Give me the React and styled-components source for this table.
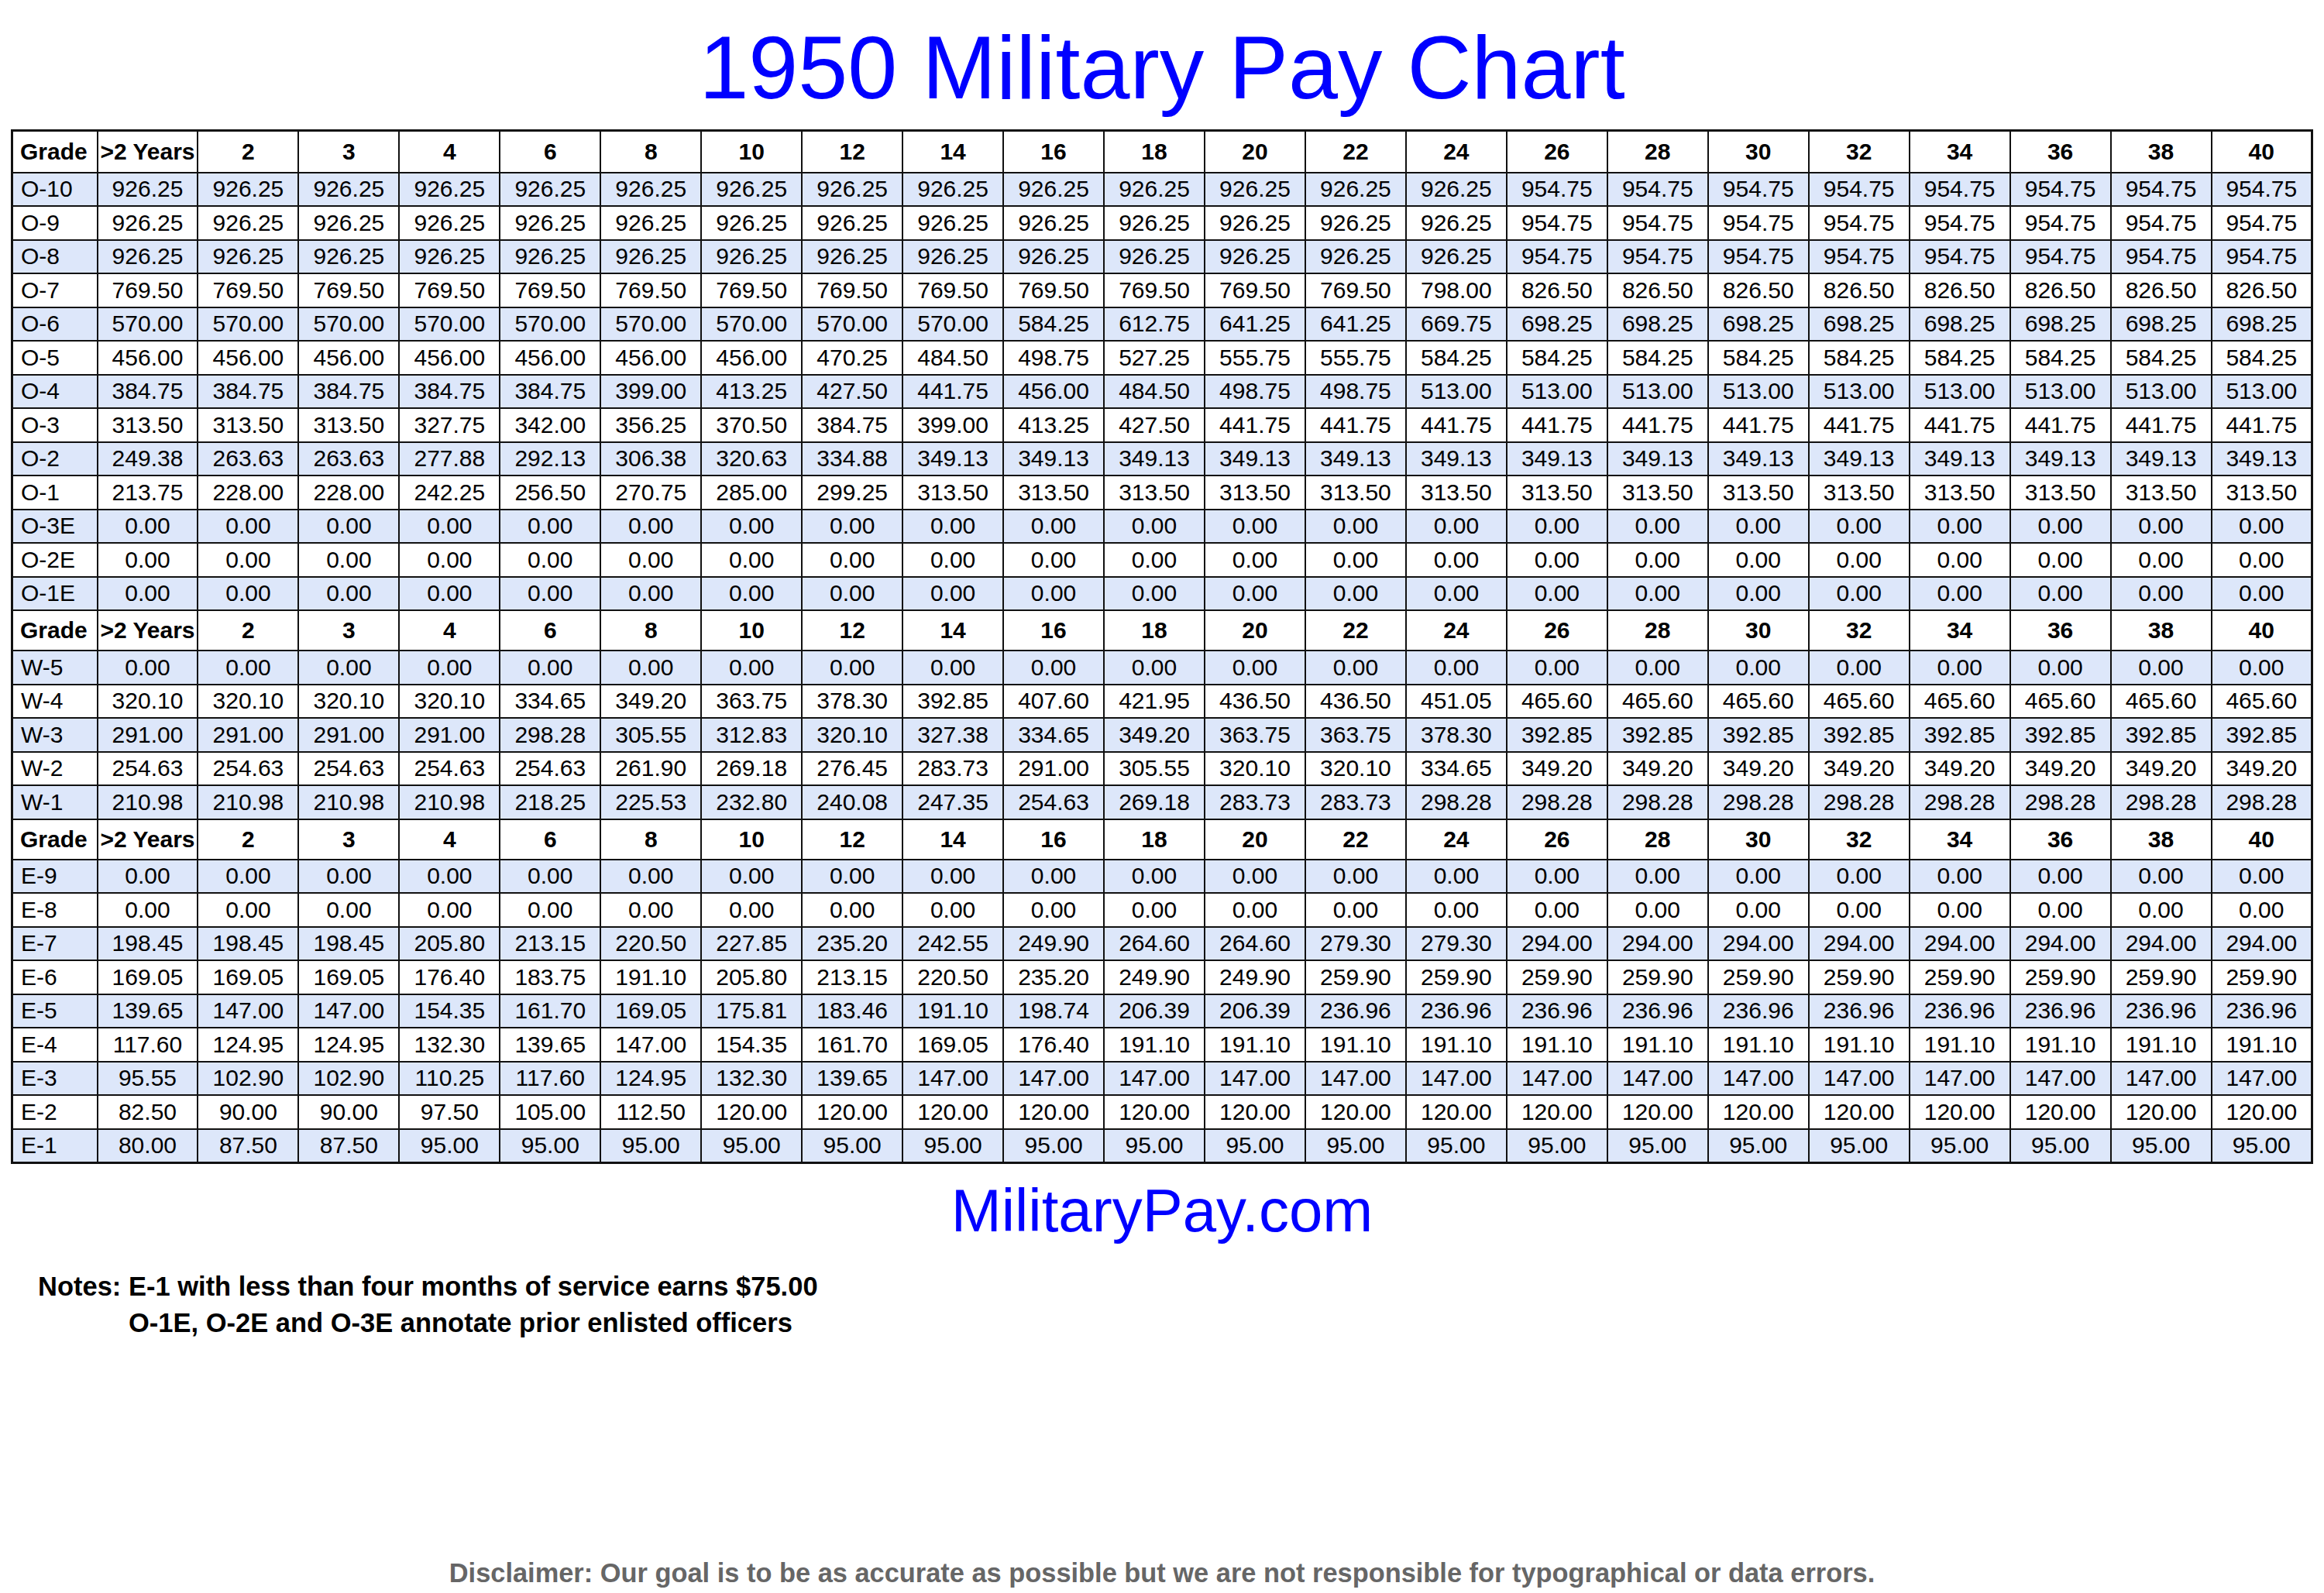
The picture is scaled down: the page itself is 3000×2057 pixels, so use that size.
import React from 'react'
import styled, { createGlobalStyle } from 'styled-components'

const GlobalStyle = createGlobalStyle`
  html, body {
    margin: 0;
    padding: 0;
    background: #ffffff;
    overflow: hidden;
  }
  body {
    font-family: "Liberation Sans", Arial, Helvetica, sans-serif;
    color: #000;
  }
`

const YEARS = ['>2 Years', '2', '3', '4', '6', '8', '10', '12', '14', '16', '18', '20', '22', '24', '26', '28', '30', '32', '34', '36', '38', '40']

// pad a row out to 22 columns with its last value
const fill = (vals) => {
  const out = [...vals]
  while (out.length < YEARS.length) out.push(out[out.length - 1])
  return out
}

const rep = (v, n) => Array(n).fill(v)

const sections = [
  [
    ['O-10', fill([...rep('926.25', 14), '954.75'])],
    ['O-9', fill([...rep('926.25', 14), '954.75'])],
    ['O-8', fill([...rep('926.25', 14), '954.75'])],
    ['O-7', fill([...rep('769.50', 13), '798.00', '826.50'])],
    ['O-6', fill([...rep('570.00', 9), '584.25', '612.75', '641.25', '641.25', '669.75', '698.25'])],
    ['O-5', fill([...rep('456.00', 7), '470.25', '484.50', '498.75', '527.25', '555.75', '555.75', '584.25'])],
    ['O-4', fill([...rep('384.75', 5), '399.00', '413.25', '427.50', '441.75', '456.00', '484.50', '498.75', '498.75', '513.00'])],
    ['O-3', fill([...rep('313.50', 3), '327.75', '342.00', '356.25', '370.50', '384.75', '399.00', '413.25', '427.50', '441.75'])],
    ['O-2', fill(['249.38', '263.63', '263.63', '277.88', '292.13', '306.38', '320.63', '334.88', '349.13'])],
    ['O-1', fill(['213.75', '228.00', '228.00', '242.25', '256.50', '270.75', '285.00', '299.25', '313.50'])],
    ['O-3E', fill(['0.00'])],
    ['O-2E', fill(['0.00'])],
    ['O-1E', fill(['0.00'])],
  ],
  [
    ['W-5', fill(['0.00'])],
    ['W-4', fill([...rep('320.10', 4), '334.65', '349.20', '363.75', '378.30', '392.85', '407.60', '421.95', '436.50', '436.50', '451.05', '465.60'])],
    ['W-3', fill([...rep('291.00', 4), '298.28', '305.55', '312.83', '320.10', '327.38', '334.65', '349.20', '363.75', '363.75', '378.30', '392.85'])],
    ['W-2', fill([...rep('254.63', 5), '261.90', '269.18', '276.45', '283.73', '291.00', '305.55', '320.10', '320.10', '334.65', '349.20'])],
    ['W-1', fill([...rep('210.98', 4), '218.25', '225.53', '232.80', '240.08', '247.35', '254.63', '269.18', '283.73', '283.73', '298.28'])],
  ],
  [
    ['E-9', fill(['0.00'])],
    ['E-8', fill(['0.00'])],
    ['E-7', fill([...rep('198.45', 3), '205.80', '213.15', '220.50', '227.85', '235.20', '242.55', '249.90', '264.60', '264.60', '279.30', '279.30', '294.00'])],
    ['E-6', fill([...rep('169.05', 3), '176.40', '183.75', '191.10', '205.80', '213.15', '220.50', '235.20', '249.90', '249.90', '259.90'])],
    ['E-5', fill(['139.65', '147.00', '147.00', '154.35', '161.70', '169.05', '175.81', '183.46', '191.10', '198.74', '206.39', '206.39', '236.96'])],
    ['E-4', fill(['117.60', '124.95', '124.95', '132.30', '139.65', '147.00', '154.35', '161.70', '169.05', '176.40', '191.10'])],
    ['E-3', fill(['95.55', '102.90', '102.90', '110.25', '117.60', '124.95', '132.30', '139.65', '147.00'])],
    ['E-2', fill(['82.50', '90.00', '90.00', '97.50', '105.00', '112.50', '120.00'])],
    ['E-1', fill(['80.00', '87.50', '87.50', '95.00'])],
  ],
]

const Page = styled.div`
  box-sizing: border-box;
  width: 3000px;
  height: 2057px;
  padding: 0 14px;
  display: flex;
  flex-direction: column;
`

const Title = styled.h1`
  margin: 30px 0 22px;
  font-family: "Liberation Sans", Arial, sans-serif;
  font-weight: 400;
  font-size: 115px;
  line-height: 1;
  color: #0000ff;
  text-align: center;
`

const Chart = styled.table`
  width: 100%;
  table-layout: fixed;
  border-collapse: collapse;
  border: 3px solid #111;
  font-size: 30px;
`

const HeadRow = styled.tr`
  height: ${(p) => (p.$first ? 54 : 52)}px;
  background: #ffffff;
`

const Row = styled.tr`
  height: 43.5px;
  background: ${(p) => (p.$shaded ? '#dde7fa' : '#ffffff')};
`

const HeadCell = styled.th`
  border: 2px solid #111;
  padding: 0;
  font-weight: 700;
  text-align: ${(p) => (p.$grade ? 'left' : 'center')};
  padding-left: ${(p) => (p.$grade ? '9px' : '0')};
  white-space: nowrap;
  overflow: hidden;
`

const Cell = styled.td`
  border: 2px solid #111;
  padding: 0;
  font-weight: 400;
  text-align: ${(p) => (p.$grade ? 'left' : 'center')};
  padding-left: ${(p) => (p.$grade ? '10px' : '0')};
  white-space: nowrap;
`

const Site = styled.div`
  margin-top: 21px;
  font-size: 78px;
  line-height: 1;
  color: #0000ff;
  text-align: center;
`

const Notes = styled.div`
  margin: 36px 0 0 35px;
  display: flex;
  font-size: 34.5px;
  font-weight: 700;
  line-height: 47px;
`

const NoteLabel = styled.span`
  white-space: pre;
`

const NoteLines = styled.div`
  display: flex;
  flex-direction: column;
`

const Disclaimer = styled.div`
  margin-top: auto;
  margin-bottom: 9px;
  font-size: 34.4px;
  font-weight: 700;
  line-height: 1;
  color: #666666;
  text-align: center;
`

const Header = ({ first }) => (
  <HeadRow $first={first}>
    <HeadCell $grade>Grade</HeadCell>
    {YEARS.map((y) => (
      <HeadCell key={y}>{y}</HeadCell>
    ))}
  </HeadRow>
)

export default function App() {
  return (
    <Page>
      <GlobalStyle />
      <Title>1950 Military Pay Chart</Title>
      <Chart>
        <colgroup>
          <col style={{ width: 110 }} />
          {YEARS.map((y) => (
            <col key={y} />
          ))}
        </colgroup>
        <tbody>
          {sections.map((rows, si) => (
            <React.Fragment key={si}>
              <Header first={si === 0} />
              {rows.map(([grade, vals], i) => (
                <Row key={grade} $shaded={i % 2 === 0}>
                  <Cell $grade>{grade}</Cell>
                  {vals.map((v, j) => (
                    <Cell key={j}>{v}</Cell>
                  ))}
                </Row>
              ))}
            </React.Fragment>
          ))}
        </tbody>
      </Chart>
      <Site>MilitaryPay.com</Site>
      <Notes>
        <NoteLabel>Notes: </NoteLabel>
        <NoteLines>
          <span>E-1 with less than four months of service earns $75.00</span>
          <span>O-1E, O-2E and O-3E annotate prior enlisted officers</span>
        </NoteLines>
      </Notes>
      <Disclaimer>
        Disclaimer: Our goal is to be as accurate as possible but we are not responsible for typographical or data errors.
      </Disclaimer>
    </Page>
  )
}
